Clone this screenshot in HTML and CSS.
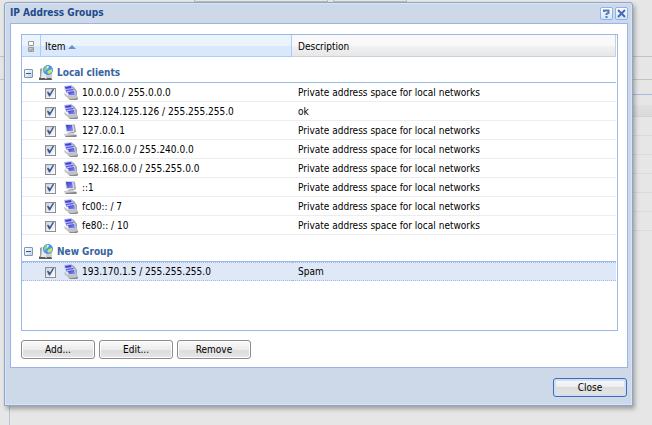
FILE: index.html
```html
<!DOCTYPE html>
<html lang="en">
<head>
<meta charset="utf-8">
<title>IP Address Groups</title>
<link rel="stylesheet" href="styles.css">
</head>
<body>
<svg class="defs" aria-hidden="true">
  <defs>
    <linearGradient id="screen" x1="0" y1="0" x2="1" y2="1">
      <stop offset="0" stop-color="#2f33cc"/><stop offset="1" stop-color="#8f95fa"/>
    </linearGradient>
    <symbol id="host" viewBox="0 0 16 16">
      <path d="M10 1l2 1 1 7-2 1z" fill="#a9a9ae"/>
      <path d="M2 1h8l1 8H3z" fill="#d9d9e4"/>
      <path d="M3 2h6l1 6H4z" fill="url(#screen)"/>
      <path d="M4 10l6-1 1 1-5 1z" fill="#8d8d8d"/>
      <path d="M1 11l9-1 4 2v1l-11 1-2-2z" fill="#cfcfcf"/>
      <path d="M2 13l11-1 1 1-1 1H3z" fill="#858585"/>
    </symbol>
    <symbol id="network" viewBox="0 0 16 16">
      <path d="M9 1l2 1 3 4v6l-2 1-3-2z" fill="#a4a4ac"/>
      <path d="M1 1l8-1 1 6H2z" fill="#b9bbf0"/>
      <path d="M2 2l6-1 1 4H3z" fill="#3d41d8"/>
      <path d="M2 4l8-1 1 5H3z" fill="#c4c6f2"/>
      <path d="M3 5l7-1 1 4H4z" fill="#4c51e0"/>
      <path d="M4 6l8-1 1 6H5z" fill="#c9cbf0"/>
      <path d="M5 7l6-1 1 4H6z" fill="url(#screen)"/>
      <path d="M1 8l2 1 2 2 8-1 2 2v1l-8 1-5-3z" fill="#c2c2c4"/>
      <path d="M4 12l3 2 8-1v1l-1 1H7z" fill="#8a8a8a"/>
    </symbol>
    <symbol id="group" viewBox="0 0 16 16">
      <path d="M1 4l2-1v10l-2 1z" fill="#9a9a9a"/>
      <path d="M3 3h4v10H2z" fill="#e8e8e8"/>
      <path d="M7 5h6v8H7z" fill="#cfcfcf"/>
      <path d="M0 13l1-1v1h5l1 1 1-1h4l1 1v1H0z" fill="#5c5c5c"/>
      <circle cx="9" cy="5" r="5" fill="#4a94ec"/>
      <path d="M6 2c2-2 4-1 4 0L9 4 7 5 6 7 5 5z" fill="#8fd874"/>
      <path d="M10 5l3-1v3l-3 2-2-2z" fill="#c0e66a"/>
      <path d="M8 1h2L9 3 8 4z" fill="#d3eeff"/>
    </symbol>
  </defs>
</svg>

<div class="backdrop" aria-hidden="true">
  <div class="strip strip-tabs"><span class="tab tab-on"></span><span class="tab"></span></div>
  <div class="strip strip-tool"></div>
  <div class="strip strip-gap"></div>
  <div class="strip strip-head"></div>
  <div class="strip strip-col"></div>
  <div class="strip strip-rows"></div>
</div>

<section class="window" role="dialog" aria-labelledby="title">
  <header class="titlebar">
    <h1 id="title">IP Address Groups</h1>
    <button class="tool" type="button" aria-label="Help"><svg viewBox="0 0 9 9"><path d="M2 3V1.500h4.500V4L4.500 5v1M4.500 7v2" fill="none" stroke="#4f7cb4" stroke-width="2"/></svg></button>
    <button class="tool" type="button" aria-label="Close window"><svg viewBox="0 0 9 9"><path d="M1 1l7 7M8 1L1 8" stroke="#4a68b4" stroke-width="2"/></svg></button>
  </header>

  <div class="content">
    <div class="grid">
      <table>
        <colgroup><col class="c-mark"><col class="c-item"><col></colgroup>
        <thead>
          <tr>
            <th class="mark"><svg viewBox="0 0 6 11" aria-label="Selection"><path d="M.5.5h5v4h-5z" fill="#fff" stroke="#999"/><path d="M.5 6.500h5v4h-5z" fill="#c8ccd2" stroke="#999"/><path d="M2 8.500l1 1 2-2" fill="none" stroke="#777"/></svg></th>
            <th class="sorted">Item<span class="arrow"></span></th>
            <th class="desc">Description</th>
          </tr>
        </thead>
        <tbody>
          <tr class="group"><th colspan="3"><div class="cell"><button class="fold" type="button" aria-label="Collapse Local clients"></button><svg class="icon"><use href="#group"/></svg>Local clients</div></th></tr>
          <tr><td colspan="2"><label class="cell"><input type="checkbox" checked><svg class="icon"><use href="#network"/></svg>10.0.0.0 / 255.0.0.0</label></td><td>Private address space for local networks</td></tr>
          <tr><td colspan="2"><label class="cell"><input type="checkbox" checked><svg class="icon"><use href="#network"/></svg>123.124.125.126 / 255.255.255.0</label></td><td>ok</td></tr>
          <tr><td colspan="2"><label class="cell"><input type="checkbox" checked><svg class="icon"><use href="#host"/></svg>127.0.0.1</label></td><td>Private address space for local networks</td></tr>
          <tr><td colspan="2"><label class="cell"><input type="checkbox" checked><svg class="icon"><use href="#network"/></svg>172.16.0.0 / 255.240.0.0</label></td><td>Private address space for local networks</td></tr>
          <tr><td colspan="2"><label class="cell"><input type="checkbox" checked><svg class="icon"><use href="#network"/></svg>192.168.0.0 / 255.255.0.0</label></td><td>Private address space for local networks</td></tr>
          <tr><td colspan="2"><label class="cell"><input type="checkbox" checked><svg class="icon"><use href="#host"/></svg>::1</label></td><td>Private address space for local networks</td></tr>
          <tr><td colspan="2"><label class="cell"><input type="checkbox" checked><svg class="icon"><use href="#network"/></svg>fc00:: / 7</label></td><td>Private address space for local networks</td></tr>
          <tr><td colspan="2"><label class="cell"><input type="checkbox" checked><svg class="icon"><use href="#network"/></svg>fe80:: / 10</label></td><td>Private address space for local networks</td></tr>
        </tbody>
        <tbody>
          <tr class="group"><th colspan="3"><div class="cell"><button class="fold" type="button" aria-label="Collapse New Group"></button><svg class="icon"><use href="#group"/></svg>New Group</div></th></tr>
          <tr class="selected"><td colspan="2"><label class="cell"><input type="checkbox" checked><svg class="icon"><use href="#network"/></svg>193.170.1.5 / 255.255.255.0</label></td><td>Spam</td></tr>
        </tbody>
      </table>
    </div>
    <div class="actions">
      <button class="btn" type="button">Add...</button>
      <button class="btn" type="button">Edit...</button>
      <button class="btn" type="button">Remove</button>
    </div>
  </div>

  <footer class="footer">
    <button class="btn primary" type="button">Close</button>
  </footer>
</section>
</body>
</html>
```
FILE: styles.css
```css
* { box-sizing: border-box; }

body {
  margin: 0;
  min-height: 100vh;
  background: #e6e6e6;
  color: #000;
  font: 10px/14px "DejaVu Sans Condensed", "DejaVu Sans", sans-serif;
  overflow: hidden;
}

button { font: inherit; color: inherit; }

.defs { position: absolute; width: 0; height: 0; }

/* Dimmed page behind the dialog */
.backdrop {
  position: absolute;
  inset: 0;
  display: flex;
  flex-direction: column;
}
.strip { border-bottom: 1px solid #c2c2ca; }
.strip-tabs { height: 57px; padding-left: 194px; display: flex; gap: 5px; }
.tab { width: 74px; height: 2px; border: 1px solid #bbb; border-top: 0; }
.tab-on { width: 134px; }
.strip-tool { height: 23px; }
.strip-gap {
  height: 15px;
  margin-left: 9px;
  border-left: 1px solid #b9c3d6;
  border-color: #a9bbdc;
}
.strip-head { height: 10px; margin-left: 10px; border: 0; }
.strip-col {
  height: 12px;
  margin-left: 10px;
  background: linear-gradient(#e0e0e0, #dadada);
  border-color: #d2d2d2;
}
.strip-rows {
  flex: 1;
  margin-left: 9px;
  border: 0;
  border-left: 1px solid #b9c3d6;
  background: repeating-linear-gradient(transparent 0 18px, #dadada 18px 19px) top / 100% 114px no-repeat;
}

/* Dialog */
.window {
  position: relative;
  margin: 2px 19px 0 4px;
  padding: 0 4px 0 5px;
  background: #cdd9e8;
  border: 1px solid #8ba6cb;
  border-radius: 3px 3px 0 0;
  box-shadow: 2px 3px 4px rgba(0, 0, 0, .3), inset 0 0 0 1px #dbe5f2;
}

.titlebar {
  display: flex;
  align-items: center;
  gap: 2px;
  height: 20px;
}
.titlebar h1 {
  flex: 1;
  margin: 0;
  font-size: 10px;
  color: #1f4a8c;
}
.tool {
  display: flex;
  align-items: center;
  justify-content: center;
  width: 13px;
  height: 13px;
  padding: 0;
  background: linear-gradient(#fff, #d3e4fa);
  border: 1px solid #8fb3e6;
  border-radius: 2px;
}
.tool svg { width: 9px; height: 9px; }

.content {
  padding: 10px 9px 8px 10px;
  background: #fff;
  border: 1px solid #99b5e5;
}

.grid {
  min-height: 297px;
  border: 1px solid #99b9e8;
  padding-right: 1px;
}
table {
  width: 100%;
  border-collapse: separate;
  border-spacing: 0;
  table-layout: fixed;
}
.c-mark { width: 19px; }
.c-item { width: 251px; }
th, td { padding: 0; text-align: left; font-weight: normal; }

thead th {
  height: 22px;
  padding: 2px 4px 0;
  background: linear-gradient(#f9f9f9 0 50%, #f1f2f3 50%, #e6e7e9);
  border-right: 1px solid #d0d0d0;
  border-bottom: 1px solid #d0d0d0;
}
thead th.mark, thead th.sorted {
  background: linear-gradient(#ebf3fd 0 50%, #dae8fb 50%, #d9e8fb);
  border-color: #aaccf6;
}
thead th.desc { padding-left: 6px; }
thead th.mark { padding: 2px 6px 0; }
.mark svg { display: block; width: 6px; height: 11px; }
.arrow {
  display: inline-block;
  margin-left: 3px;
  border: 4px solid transparent;
  border-top: 0;
  border-bottom-color: #6593cf;
  vertical-align: 1px;
}

.cell { display: flex; align-items: center; }
.icon { flex: none; width: 16px; height: 16px; }

.group th {
  height: 26px;
  padding: 7px 0 0 2px;
  border-bottom: 1px solid #99bbe8;
  font-weight: bold;
  color: #3764a0;
}
tbody + tbody .group th { height: 27px; }
.group .icon { margin: 0 2px 0 6px; }
.fold {
  width: 9px;
  height: 9px;
  padding: 0;
  background: linear-gradient(#3c567c, #3c567c) center / 5px 1px no-repeat, linear-gradient(135deg, #fff, #c3d2e8);
  border: 1px solid #7e95b8;
  border-radius: 1px;
}

td {
  height: 19px;
  padding: 2px 6px 0;
  border-bottom: 1px solid #ededed;
}
td:first-child { padding-left: 23px; }
td .cell { height: 16px; }
td .icon { margin: 0 3px 0 7px; }

input[type="checkbox"] {
  appearance: none;
  flex: none;
  width: 11px;
  height: 11px;
  margin: 0;
  background: linear-gradient(135deg, #cdd3da, #fff);
  border: 1px solid #8b8f94;
  outline: 0;
}
input[type="checkbox"]:checked::before {
  content: "";
  display: block;
  width: 9px;
  height: 9px;
  background: #3c568f;
  clip-path: polygon(1px 4px, 2px 3px, 4px 5px, 7px 0, 8px 1px, 4px 8px, 3px 8px);
}

.selected td {
  padding-top: 1px;
  background: #dfe8f6;
  border-top: 1px dotted #a3bae9;
  border-bottom: 1px dotted #a3bae9;
}

.actions { display: flex; gap: 4px; margin-top: 9px; }
.btn {
  width: 74px;
  height: 19px;
  padding: 0;
  background: linear-gradient(#fafafa, #ececec 50%, #dcdcdc 50%, #e6e6e6);
  border: 1px solid #8c8c8c;
  border-radius: 3px;
  box-shadow: inset 0 0 0 1px #fff;
}

.footer {
  display: flex;
  justify-content: flex-end;
  padding: 10px 1px 8px 0;
}
.primary {
  border-color: #3d6cb0;
  box-shadow: inset 0 0 0 2px #cfe0f5;
}
```
